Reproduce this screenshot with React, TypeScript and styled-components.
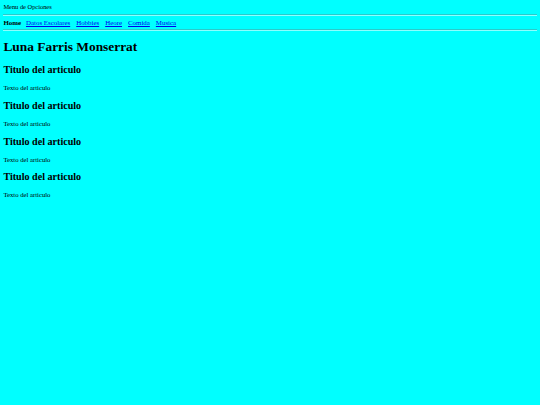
import React from "react";
import styled, { createGlobalStyle } from "styled-components";

const Global = createGlobalStyle`
  html, body {
    background: #00ffff;
  }
  body {
    margin: 3.4px;
    font-family: "Liberation Serif", "Times New Roman", serif;
    color: #000;
  }
`;

const MenuTitle = styled.div`
  font-size: 6.4px;
  line-height: 7.7px;
`;

const Rule = styled.hr`
  margin: 2.8px 0;
  height: 0;
  border: 0;
  border-top: 1px solid rgba(90, 140, 140, 0.45);
  border-bottom: 1px solid rgba(255, 255, 255, 0.55);
`;

const Nav = styled.nav`
  display: flex;
  align-items: baseline;
  gap: 6px;
  font-size: 6.9px;
  line-height: 7.7px;
`;

const NavItem = styled.a<{ $active?: boolean }>`
  color: ${(p) => (p.$active ? "#000" : "#0000ee")};
  font-weight: ${(p) => (p.$active ? "bold" : "normal")};
  text-decoration: ${(p) => (p.$active ? "none" : "underline")};
  margin-right: ${(p) => (p.$active ? "-1px" : "0")};
  cursor: pointer;
`;

const Title = styled.h1`
  font-size: 13.4px;
  line-height: 15.5px;
  margin: 8.1px 0 9.2px;
`;

const Article = styled.article``;

const ArticleTitle = styled.h2`
  font-size: 10.1px;
  line-height: 11.6px;
  margin: 8.1px 0 8.4px;
`;

const ArticleText = styled.p`
  font-size: 6.7px;
  line-height: 7.7px;
  margin: 8.1px 0;
`;

const links = ["Datos Escolares", "Hobbies", "Heore", "Comida", "Musica"];

export default function App() {
  return (
    <>
      <Global />
      <header>
        <MenuTitle>Menu de Opciones</MenuTitle>
        <Rule />
        <Nav>
          <NavItem $active>Home</NavItem>
          {links.map((l) => (
            <NavItem key={l} href="#">
              {l}
            </NavItem>
          ))}
        </Nav>
        <Rule />
      </header>
      <main>
        <Title>Luna Farris Monserrat</Title>
        {[0, 1, 2, 3].map((i) => (
          <Article key={i}>
            <ArticleTitle>Titulo del articulo</ArticleTitle>
            <ArticleText>Texto del articulo</ArticleText>
          </Article>
        ))}
      </main>
    </>
  );
}
